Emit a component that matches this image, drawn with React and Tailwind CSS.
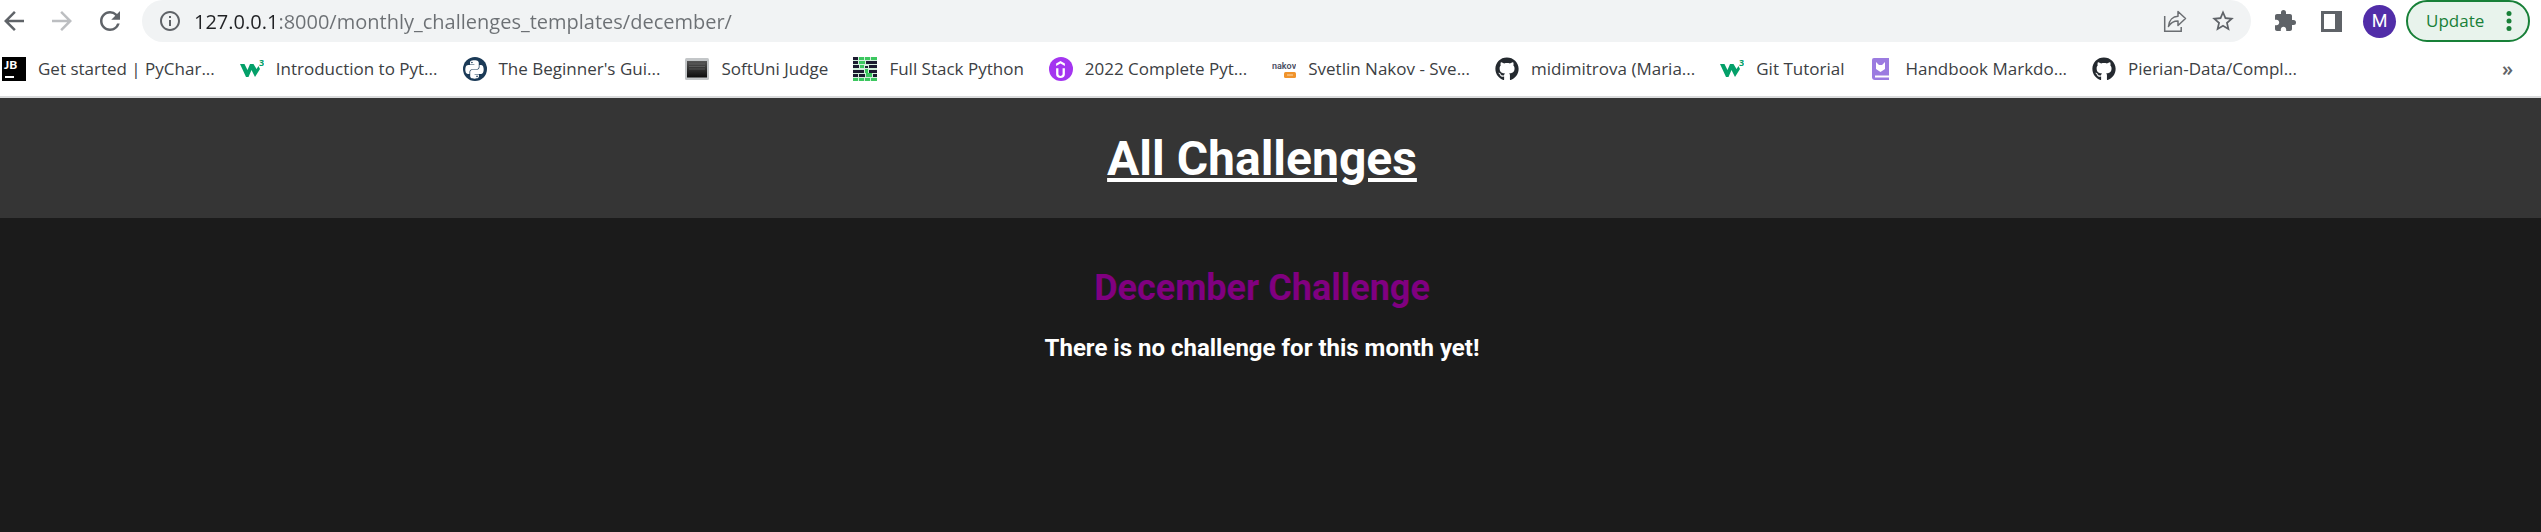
import { FaGithub, FaPython } from "react-icons/fa";
import { SiUdemy } from "react-icons/si";
import { MdArrowBack, MdArrowForward, MdRefresh, MdInfoOutline, MdStarBorder, MdExtension } from "react-icons/md";

function JetBrainsIcon() {
  return (
    <span className="relative block size-6 bg-black font-['Lato',sans-serif] text-xs leading-4 font-black text-white">
      <span className="block pl-0.5">JB</span>
      <span className="absolute bottom-[3px] left-[3px] h-0.5 w-[9px] bg-white" />
    </span>
  );
}

function W3Icon() {
  return (
    <svg viewBox="0 0 24 24" className="size-6" fill="#04a069">
      <path d="M0 7h4.500l3 6L10 7h3.500l3 5 2-3 1.500 3-5 8-3.500-7-3 7H6z" />
      <text x="19" y="9" fontSize="9" fontWeight="700" fontFamily="Open Sans, sans-serif">3</text>
    </svg>
  );
}

function PythonIcon() {
  return (
    <span className="flex size-6 items-center justify-center rounded-full bg-[#1b3a57] text-white">
      <FaPython className="size-[21px]" />
    </span>
  );
}

function JudgeIcon() {
  return (
    <svg viewBox="0 0 24 24" className="size-6">
      <defs>
        <linearGradient id="judge" x1="0" y1="0" x2="0" y2="1">
          <stop offset="0" stopColor="#555" />
          <stop offset="1" stopColor="#0c0c0c" />
        </linearGradient>
      </defs>
      <rect x="0" y="1" width="24" height="22" rx="1.5" fill="#c3c6c8" />
      <rect x="2" y="4" width="20" height="16.5" fill="url(#judge)" />
      <path d="M4 7h16M4 9.500h16M4 12h16" stroke="#777" strokeWidth=".5" />
    </svg>
  );
}

function FullStackIcon() {
  return (
    <svg viewBox="0 0 24 24" className="size-6">
      <rect width="24" height="24" fill="#d3efdc" />
      <path
        fill="#1c1b30"
        d="M0 0h5v3H0zM0 4h5v3H0zM13 4h11v3H13zM0 8h6v3H0zM12 9h3v2h-3zM16 8h8v3h-8zM0 13h11v3H0zM16 13h8v3h-8zM0 17h5v3H0zM6 17h6v3H6zM20 17h4v3h-4z"
      />
      <path
        fill="#3cc75f"
        d="M6 0h5v3H6zM12 0h5v3h-5zM18 0h6v3h-6zM6 4h6v3H6zM7 8h4v3H7zM12 12h3v4h-3zM13 16h6v4h-6zM0 21h5v3H0zM6 21h5v3H6zM12 21h5v3h-5zM18 21h6v3h-6z"
      />
    </svg>
  );
}

function UdemyIcon() {
  return (
    <span className="flex size-6 items-center justify-center rounded-full bg-[#a435f0] text-white">
      <SiUdemy className="size-[17px]" />
    </span>
  );
}

function NakovIcon() {
  return (
    <svg viewBox="0 0 24 24" className="size-6">
      <text x="0" y="12" fontSize="9" fontWeight="600" fontFamily="Roboto, sans-serif" fill="#4a4f63">nakov</text>
      <rect x="12" y="15" width="12" height="6" rx="1.5" fill="#f0932b" />
      <path d="M15 18h6" stroke="#fbd9ae" />
    </svg>
  );
}

function GithubIcon() {
  return <FaGithub className="size-6 text-[#24292f]" />;
}

function HandbookIcon() {
  return (
    <svg viewBox="0 0 24 24" className="size-6">
      <path d="M5 1h15v22H6a3 3 0 0 1-3-3V3a2 2 0 0 1 2-2z" fill="#9b7be0" />
      <path d="M6 19.500h14" stroke="#fff" strokeWidth="2" />
      <path d="M7 5l3 3h3l3-3v7l-4.500 3L7 12z" fill="#fff" />
    </svg>
  );
}

function ShareIcon() {
  return (
    <svg viewBox="0 0 24 24" className="size-6" fill="none" stroke="#6b6e72" strokeWidth="1.5">
      <path d="M1.700 7v15.300h16.500V18" />
      <path d="M5.500 17.500C6 11 10 7.500 15 7.300V2.500l7.500 7-7.500 7V12c-4.500 0-7.500 2-9.500 5.500z" strokeLinejoin="round" />
    </svg>
  );
}

const bookmarks = [
  ["Get started | PyChar...", JetBrainsIcon],
  ["Introduction to Pyt...", W3Icon],
  ["The Beginner's Gui...", PythonIcon],
  ["SoftUni Judge", JudgeIcon],
  ["Full Stack Python", FullStackIcon],
  ["2022 Complete Pyt...", UdemyIcon],
  ["Svetlin Nakov - Sve...", NakovIcon],
  ["midimitrova (Maria...", GithubIcon],
  ["Git Tutorial", W3Icon],
  ["Handbook Markdo...", HandbookIcon],
  ["Pierian-Data/Compl...", GithubIcon],
];

function IconButton({ label, children }) {
  return (
    <button type="button" aria-label={label} className="flex size-6 items-center justify-center">
      {children}
    </button>
  );
}

function Toolbar() {
  return (
    <div className="flex h-[42px] items-center pr-[11px] pl-0.5 text-[#5f6368]">
      <div className="flex gap-6 pr-5">
        <IconButton label="Back"><MdArrowBack className="size-[30px] shrink-0" /></IconButton>
        <span className="flex text-[#bcbec1]"><IconButton label="Forward"><MdArrowForward className="size-[30px] shrink-0" /></IconButton></span>
        <IconButton label="Reload"><MdRefresh className="size-[30px] shrink-0" /></IconButton>
      </div>
      <div className="flex h-full flex-1 items-center rounded-full bg-[#f1f3f4] pr-4 pl-4">
        <IconButton label="Site information"><MdInfoOutline className="size-6" /></IconButton>
        {/* The host is darker than the port and path */}
        <input
          type="text"
          aria-label="Address"
          defaultValue="127.0.0.1:8000/monthly_challenges_templates/december/"
          className="ml-3 h-8 flex-1 bg-[linear-gradient(to_right,#202124_83px,#6c7074_83px)] bg-clip-text text-xl text-transparent outline-none"
        />
        <div className="flex gap-6">
          <IconButton label="Share"><ShareIcon /></IconButton>
          <IconButton label="Bookmark"><MdStarBorder className="size-[26px] shrink-0" /></IconButton>
        </div>
      </div>
      <div className="flex items-center gap-[22px] pl-[22px]">
        <IconButton label="Extensions"><MdExtension className="size-6" /></IconButton>
        <IconButton label="Side panel">
          <svg viewBox="0 0 21 21" className="size-[21px]"><path d="M0 0h21v21H0zM3 3v15h11V3z" fill="currentColor" fillRule="evenodd" /></svg>
        </IconButton>
      </div>
      <button type="button" className="ml-5 size-[33px] rounded-full bg-[#512da8] font-['Roboto',sans-serif] text-lg text-white">M</button>
      <button type="button" className="ml-2.5 flex h-full w-[124px] items-center justify-between rounded-full border-2 border-[#188038] bg-[#e8f3ec] pr-4 pl-[18px] text-[17px] text-[#188038]">
        Update
        <svg viewBox="0 0 6 20" className="h-5 w-1.5" fill="currentColor"><circle cx="3" cy="2.5" r="2.5" /><circle cx="3" cy="10" r="2.5" /><circle cx="3" cy="17.5" r="2.5" /></svg>
      </button>
    </div>
  );
}

export default function App() {
  return (
    <div className="flex min-h-screen flex-col bg-[#1b1b1b] font-['Open_Sans',sans-serif]">
      <header className="border-b-2 border-[#dadbdc] bg-white">
        <Toolbar />
        <nav aria-label="Bookmarks" className="flex h-[54px] items-center justify-between pr-7 pl-0.5 text-[17px] text-[#3c4043]">
          <ul className="flex gap-[25px] whitespace-nowrap">
            {bookmarks.map(([label, Icon]) => (
              <li key={label}>
                <a href="#" className="flex items-center gap-3"><Icon />{label}</a>
              </li>
            ))}
          </ul>
          <button type="button" aria-label="More bookmarks" className="text-xl font-semibold text-[#5f6368]">»</button>
        </nav>
      </header>
      <div className="flex-1 text-center font-['Roboto',sans-serif] font-bold text-white">
        <div className="bg-[#353535] pt-[25px] pr-[17px] pb-[23px]">
          <h1 className="text-5xl leading-[72px]"><a href="#" className="underline">All Challenges</a></h1>
        </div>
        <main className="pt-[49px] pr-[17px]">
          <h2 className="text-4xl leading-[42px] text-[#800080]">December Challenge</h2>
          <p className="mt-[25px] text-2xl leading-7">There is no challenge for this month yet!</p>
        </main>
      </div>
    </div>
  );
}
